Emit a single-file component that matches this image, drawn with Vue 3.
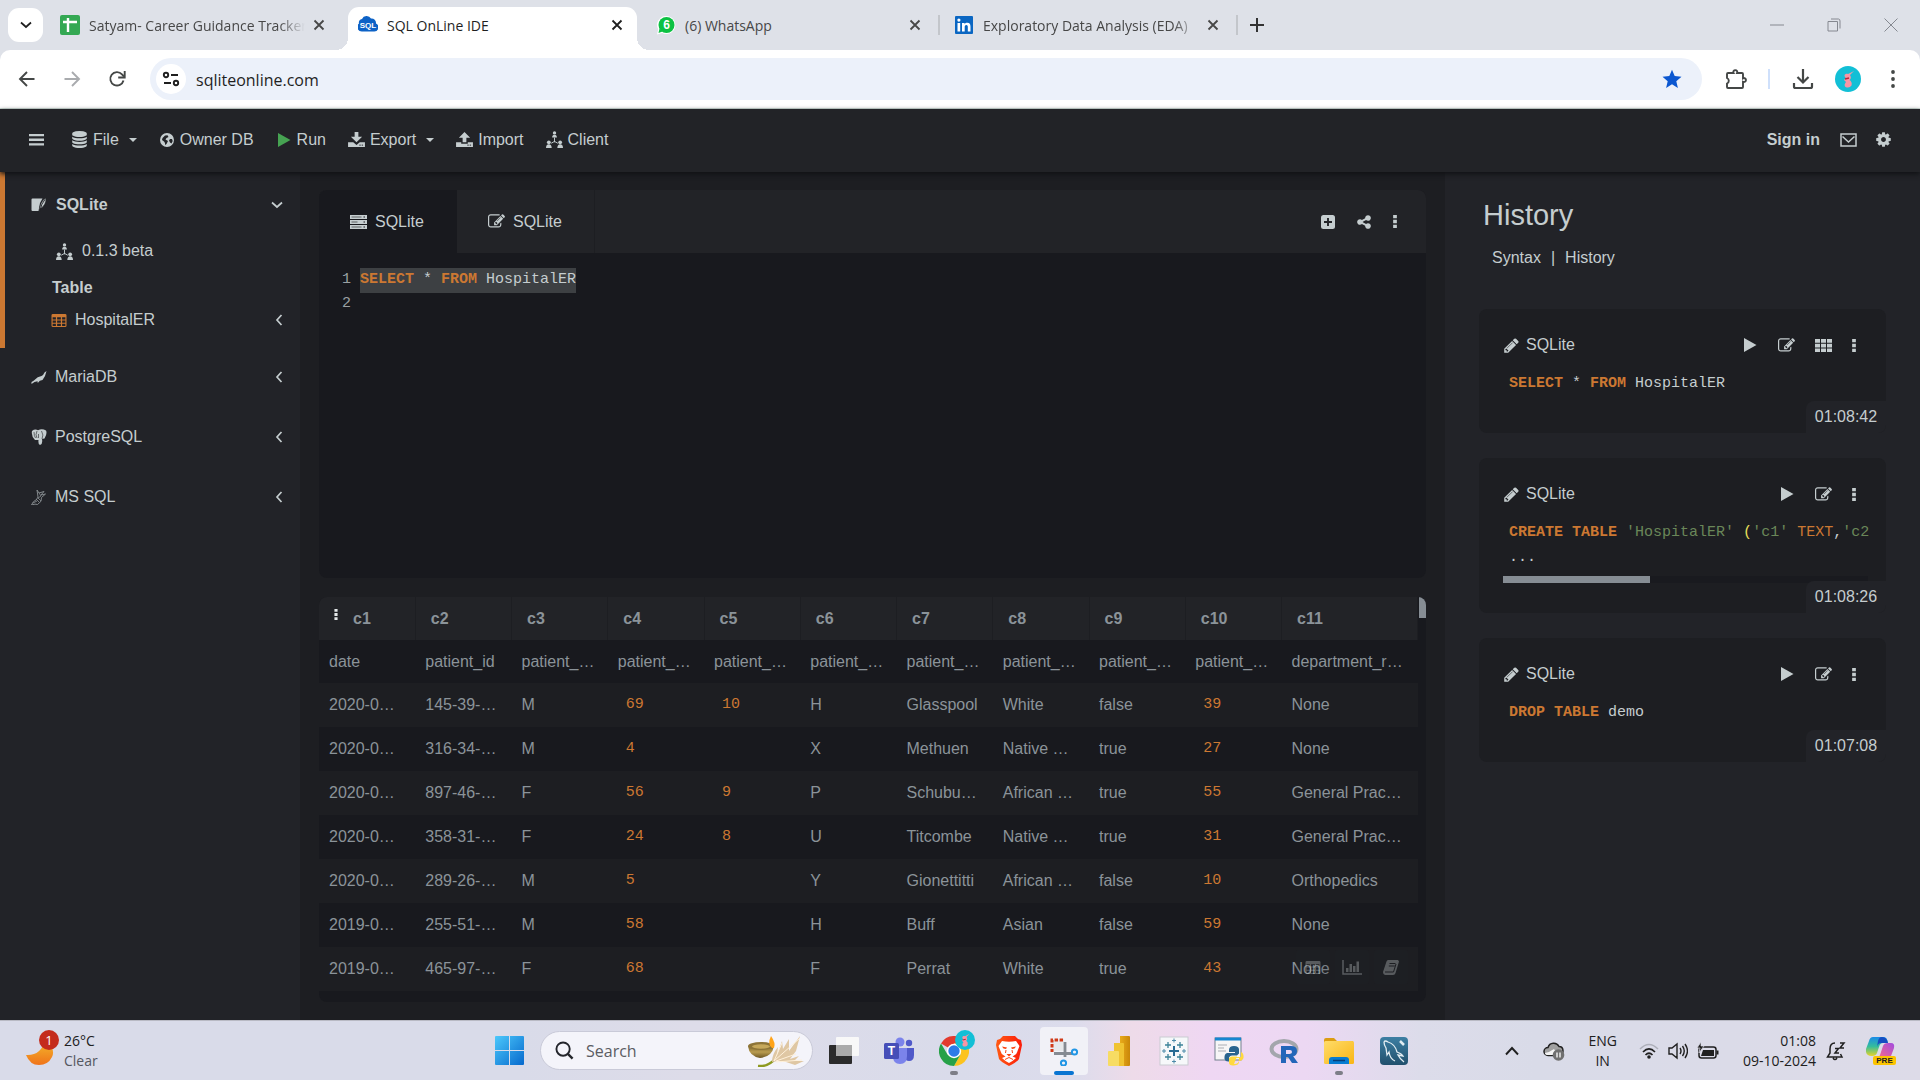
<script setup>
const browserTabs = [
  { title: 'Satyam- Career Guidance Tracker', icon: 'sheets', fade: true },
  { title: 'SQL OnLine IDE', icon: 'sqlcloud', mark: 'SQL', active: true },
  { title: '(6) WhatsApp', icon: 'whatsapp', mark: '6', divider: true },
  { title: 'Exploratory Data Analysis (EDA)', icon: 'linkedin', fade: true, divider: true },
]

const engines = [
  { name: 'MariaDB', icon: 'seal' },
  { name: 'PostgreSQL', icon: 'elephant' },
  { name: 'MS SQL', icon: 'mssql' },
]

const columns = ['c1', 'c2', 'c3', 'c4', 'c5', 'c6', 'c7', 'c8', 'c9', 'c10', 'c11']
const rows = [
  ['date', 'patient_id', 'patient_…', 'patient_…', 'patient_…', 'patient_…', 'patient_…', 'patient_…', 'patient_…', 'patient_…', 'department_r…'],
  ['2020-0…', '145-39-…', 'M', 69, 10, 'H', 'Glasspool', 'White', 'false', 39, 'None'],
  ['2020-0…', '316-34-…', 'M', 4, '', 'X', 'Methuen', 'Native …', 'true', 27, 'None'],
  ['2020-0…', '897-46-…', 'F', 56, 9, 'P', 'Schubu…', 'African …', 'true', 55, 'General Prac…'],
  ['2020-0…', '358-31-…', 'F', 24, 8, 'U', 'Titcombe', 'Native …', 'true', 31, 'General Prac…'],
  ['2020-0…', '289-26-…', 'M', 5, '', 'Y', 'Gionettitti', 'African …', 'false', 10, 'Orthopedics'],
  ['2019-0…', '255-51-…', 'M', 58, '', 'H', 'Buff', 'Asian', 'false', 59, 'None'],
  ['2019-0…', '465-97-…', 'F', 68, '', 'F', 'Perrat', 'White', 'true', 43, 'None'],
]

const history = [
  {
    time: '01:08:42',
    grid: true,
    lines: [[['SELECT', 'kw'], [' * ', ''], ['FROM', 'kw'], [' HospitalER', '']]],
  },
  {
    time: '01:08:26',
    scroll: true,
    lines: [
      [['CREATE', 'kw'], [' ', ''], ['TABLE', 'kw'], [' ', ''], ["'HospitalER'", 'str'], [' ', ''], ['(', 'par'], ["'c1'", 'str'], [' ', ''], ['TEXT', 'type'], [',', ''], ["'c2", 'str']],
      [['...', '']],
    ],
  },
  {
    time: '01:07:08',
    lines: [[['DROP', 'kw'], [' ', ''], ['TABLE', 'kw'], [' demo', '']]],
  },
]

const apps = [
  { name: 'Task view', icon: 'taskview' },
  { name: 'Teams', icon: 'teams', mark: 'T' },
  { name: 'Chrome', icon: 'chrome', running: true },
  { name: 'Brave', icon: 'brave' },
  { name: 'Snipping Tool', icon: 'snip', active: true },
  { name: 'Power BI', icon: 'powerbi' },
  { name: 'Tableau', icon: 'tableau' },
  { name: 'IDLE', icon: 'idle' },
  { name: 'R', icon: 'rlang' },
  { name: 'File Explorer', icon: 'folder', running: true },
  { name: 'MySQL Workbench', icon: 'mysql' },
]
</script>

<template>
  <div class="screen">
    <svg class="sprite" aria-hidden="true">
      <defs>
        <linearGradient id="gMoon" x1="0" y1="0" x2="0" y2="1"><stop offset="0" stop-color="#f3bb2c" /><stop offset="1" stop-color="#f0731a" /></linearGradient>
        <linearGradient id="gWin" x1="0" y1="0" x2="1" y2="1"><stop offset="0" stop-color="#4cc8fb" /><stop offset="1" stop-color="#0669cd" /></linearGradient>
        <linearGradient id="gFolder" x1="0" y1="0" x2="1" y2="1"><stop offset="0" stop-color="#ffdc6a" /><stop offset="1" stop-color="#f9b514" /></linearGradient>
        <linearGradient id="gBrave" x1="0" y1="0" x2="1" y2="0"><stop offset="0" stop-color="#ff5a13" /><stop offset="1" stop-color="#fb1c09" /></linearGradient>
        <linearGradient id="gSql" x1="0" y1="0" x2="0" y2="1"><stop offset="0" stop-color="#3d7fa3" /><stop offset="1" stop-color="#21506d" /></linearGradient>
        <linearGradient id="gCopA" x1="0" y1="0" x2="0" y2="1"><stop offset="0" stop-color="#1a8be8" /><stop offset=".5" stop-color="#35bd9b" /><stop offset="1" stop-color="#e6d429" /></linearGradient>
        <linearGradient id="gCopB" x1="1" y1="0" x2="0" y2="1"><stop offset="0" stop-color="#a24be0" /><stop offset="1" stop-color="#ff6f80" /></linearGradient>
        <linearGradient id="gDiya" x1="0" y1="0" x2="0" y2="1"><stop offset="0" stop-color="#7a642c" /><stop offset=".5" stop-color="#b99c50" /><stop offset="1" stop-color="#6d5724" /></linearGradient>
        <linearGradient id="gBi" x1="0" y1="0" x2="1" y2="0"><stop offset="0" stop-color="#e9ab1b" /><stop offset="1" stop-color="#c98709" /></linearGradient>
      </defs>
      <symbol id="sheets" viewBox="0 0 20 20"><rect width="20" height="20" rx="2" fill="#34a853" /><path d="M8 3v14M3 7h14" stroke="#fff" stroke-width="2.4" /></symbol>
      <symbol id="sqlcloud" viewBox="0 0 20 20"><path d="M4 16.500A4.500 4.500 0 0 1 1 8.500a3.500 3.500 0 0 1 3-4.500A5 5 0 0 1 13 3.500a4.500 4.500 0 0 1 5 5A4.200 4.200 0 0 1 16 16.500z" fill="#0d62c6" /></symbol>
      <symbol id="whatsapp" viewBox="0 0 20 20"><path d="M10.500 1a9 9 0 1 1-4.300 17L1 19.500l1.200-5.200A9 9 0 0 1 10.500 1z" fill="#fff" /><circle cx="10.500" cy="10" r="8" fill="#0cc143" /><path d="M2.500 18l1-4.500 3 3z" fill="#0cc143" /></symbol>
      <symbol id="linkedin" viewBox="0 0 20 20"><rect x="1" y="1" width="18" height="18" rx="1" fill="#0a66c2" /><path d="M3.500 8h2.700v8.500H3.500zM8 8h2.600v1.200c.5-.9 1.500-1.400 2.700-1.400 2.500 0 3.200 1.600 3.200 4v4.700h-2.700v-4.200c0-1.200-.2-2.200-1.500-2.200s-1.600 1-1.600 2.200v4.200H8z" fill="#fff" /><circle cx="4.900" cy="5.100" r="1.600" fill="#fff" /></symbol>
      <symbol id="x" viewBox="0 0 12 12"><path d="M1.500 1.500l9 9M10.500 1.500l-9 9" stroke="currentColor" stroke-width="1.800" fill="none" /></symbol>
      <symbol id="back" viewBox="0 0 18 18"><path d="M16.500 9H2.500M9 2L2 9l7 7" stroke="currentColor" stroke-width="1.900" fill="none" /></symbol>
      <symbol id="fwd" viewBox="0 0 18 18"><path d="M1.500 9h14M9 2l7 7-7 7" stroke="currentColor" stroke-width="1.900" fill="none" /></symbol>
      <symbol id="reload" viewBox="0 0 18 18"><path d="M15.500 10.500A6.700 6.700 0 1 1 14 4.300l2 2.200" stroke="currentColor" stroke-width="1.900" fill="none" /><path d="M16.700 1v6.500h-6.500" stroke="currentColor" stroke-width="1.900" fill="none" /></symbol>
      <symbol id="tune" viewBox="0 0 18 18"><g stroke="currentColor" stroke-width="1.900" fill="none"><circle cx="4" cy="5" r="2.200" /><path d="M9 5h7M2 13h7" /><circle cx="14" cy="13" r="2.200" /></g></symbol>
      <symbol id="star" viewBox="0 0 20 20"><path d="M10 .8l2.700 6.300 6.800.6-5.200 4.500 1.600 6.700L10 15.300l-5.900 3.600 1.600-6.700L.5 7.700l6.800-.6z" fill="#0b57d0" /></symbol>
      <symbol id="puzzle" viewBox="0 0 22 22"><path d="M3 5h5.500a2 2 0 1 1 3.600 0H17q1 0 1 1v4.300a2 2 0 1 1 0 3.500V19q0 1-1 1H3q-1 0-1-1v-3.500a3 3 0 0 0 0-5.500V6q0-1 1-1z" fill="none" stroke="currentColor" stroke-width="1.900" /></symbol>
      <symbol id="dl" viewBox="0 0 22 22"><path d="M11 1v13M5.500 9l5.500 5.500L16.500 9M2 15v3.500q0 1.500 1.500 1.500h15q1.500 0 1.500-1.500V15" fill="none" stroke="currentColor" stroke-width="2.200" /></symbol>
      <symbol id="avatar" viewBox="0 0 26 26"><circle cx="13" cy="13" r="13" fill="#12bfd6" /><path d="M11 12C8 10 10 7 13 8l6-3-4 4q2 3-.5 5 3 2 2 5.500-2 3-6 1.500-2-2 .5-5l-2-2z" fill="#f795a5" /><path d="M10 13l4-1" stroke="#b3283c" stroke-width="1.500" /></symbol>
      <symbol id="dots" viewBox="0 0 6 20"><circle cx="3" cy="3" r="1.900" fill="currentColor" /><circle cx="3" cy="10" r="1.900" fill="currentColor" /><circle cx="3" cy="17" r="1.900" fill="currentColor" /></symbol>
      <symbol id="kebab" viewBox="0 0 4 14"><path d="M0 0h4v3.600H0zM0 5.200h4v3.600H0zM0 10.400h4V14H0z" fill="currentColor" /></symbol>
      <symbol id="bars" viewBox="0 0 16 16"><path d="M0 2h16v2.500H0zM0 7h16v2.500H0zM0 12h16v2.500H0z" fill="currentColor" /></symbol>
      <symbol id="db" viewBox="0 0 1792 1792"><path fill="currentColor" d="M896 768q237 0 443-43t325-127v170q0 69-103 128t-280 93.500-385 34.500-385-34.500-280-93.500-103-128v-170q119 84 325 127t443 43zm0 768q237 0 443-43t325-127v170q0 69-103 128t-280 93.500-385 34.500-385-34.500-280-93.500-103-128v-170q119 84 325 127t443 43zm0-384q237 0 443-43t325-127v170q0 69-103 128t-280 93.500-385 34.500-385-34.500-280-93.500-103-128v-170q119 84 325 127t443 43zm0-1152q208 0 385 34.500t280 93.500 103 128v128q0 69-103 128t-280 93.500-385 34.500-385-34.500-280-93.500-103-128v-128q0-69 103-128t280-93.500 385-34.500z" /></symbol>
      <symbol id="globe" viewBox="0 0 16 16"><path fill="currentColor" fill-rule="evenodd" d="M8 1a7 7 0 1 1 0 14A7 7 0 0 1 8 1zM8.500 3.200L6 3.500 3.500 6l-.5 2 2 1.500 1 1.500v2l1.500-1 1.500-3-2.500-1.500L7.500 6l2-1zM11 7l-1 1.500 1 2 1.500 1L13.700 9l-.7-2z" /></symbol>
      <symbol id="play" viewBox="0 0 16 16"><path fill="currentColor" d="M2 1v14l12.500-7z" /></symbol>
      <symbol id="download" viewBox="0 0 18 16"><path fill="currentColor" d="M7 0h4v5h4L9 11 3 5h4zM0 11h5.500L9 13.800 12.500 11H18v5H0z" /><path d="M12 14h1.500M14.500 14H16" stroke="#222327" /></symbol>
      <symbol id="upload" viewBox="0 0 18 16"><path fill="currentColor" d="M9 0l6 6h-4v5H7V6H3zM0 11h5.500v1.500h7V11H18v5H0z" /><path d="M12 14h1.500M14.500 14H16" stroke="#222327" /></symbol>
      <symbol id="nodes" viewBox="0 0 18 18"><g fill="currentColor"><circle cx="9" cy="2" r="1.800" /><path d="M6.500 7q0-3 2.500-3t2.500 3z" /><circle cx="3" cy="12" r="2" /><path d="M0 18q0-4 3-4t3 4z" /><circle cx="15" cy="12" r="2" /><path d="M12 18q0-4 3-4t3 4z" /></g><path d="M9 7v5M9 11l-3.500 2M9 11l3.500 2" stroke="currentColor" stroke-width="1" /></symbol>
      <symbol id="mail" viewBox="0 0 17 14"><path d="M1 1h15v12H1zM2.500 3.500l6 5.500 6-5.500" fill="none" stroke="currentColor" stroke-width="1.500" /></symbol>
      <symbol id="cog" viewBox="0 0 1792 1792"><path fill="currentColor" d="M1152 896q0-106-75-181t-181-75-181 75-75 181 75 181 181 75 181-75 75-181zm512-109v222q0 12-8 23t-20 13l-185 28q-19 54-39 91 35 50 107 138 10 12 10 25t-9 23q-27 37-99 108t-94 71q-12 0-26-9l-138-108q-44 23-91 38-16 136-29 186-7 28-36 28h-222q-14 0-24.500-8.500t-11.500-21.500l-28-184q-49-16-90-37l-141 107q-10 9-25 9-14 0-25-11-126-114-165-168-7-10-7-23 0-12 8-23 15-21 51-66.500t54-70.500q-27-50-41-99l-183-27q-13-2-21-12.500t-8-23.500v-222q0-12 8-23t19-13l186-28q14-46 39-92-40-57-107-138-10-12-10-24 0-10 9-23 26-36 98.500-107.500t94.500-71.500q13 0 26 10l138 107q44-23 91-38 16-136 29-186 7-28 36-28h222q14 0 24.500 8.500t11.500 21.500l28 184q49 16 90 37l142-107q9-9 24-9 13 0 25 10 129 119 165 170 7 8 7 22 0 12-8 23-15 21-51 66.500t-54 70.500q26 50 41 98l183 28q13 2 21 12.500t8 23.500z" /></symbol>
      <symbol id="feather" viewBox="0 0 16 16"><path d="M1.500 1.500h10L9 6 7.500 14H1.500q-1 0-1-1v-10.500q0-1 1-1z" fill="currentColor" /><path d="M8.300 16Q8.500 4 15 1q.5 7-6 11z" fill="currentColor" stroke="#222327" stroke-width=".6" /><path d="M8.800 14Q10.500 6 14 2.500" stroke="#222327" stroke-width=".9" fill="none" /></symbol>
      <symbol id="seal" viewBox="0 0 16 16"><path d="M15.500 2L14 7l-2.500 4-2.700.8-2 2.200-.3-1.800-3 .8-3 2L.500 13q2-.8 3-2 3-3.500 7-4 2-1 3-3.500z" fill="currentColor" /></symbol>
      <symbol id="elephant" viewBox="0 0 16 16"><path d="M1 2Q4-.5 7 1.200q4-2 8 .3 1.500 3-1.500 8L11 10q1 5-2 6-2-.5-1.500-5L4 11Q0 7 1 2z" fill="currentColor" /><path d="M6 2q-2 4 0 7M10.500 2q2.500 4 .5 8M7.500 5v4M3 3q0 4 1.500 6" stroke="#222327" fill="none" stroke-width=".6" /></symbol>
      <symbol id="mssql" viewBox="0 0 16 16"><path d="M6 1l2 3 5-1.500-3 3.500 4.500-1-4 3.500q1 4-4 7-2-1-6 .5 1-3.500 5-5.500L7 8z" fill="none" stroke="currentColor" stroke-width=".9" /><path d="M8 4l2 3-3 2 3 3M5 10l3 3M2 14l4-2" stroke="currentColor" stroke-width=".8" fill="none" /></symbol>
      <symbol id="tablei" viewBox="0 0 16 16"><path fill="currentColor" fill-rule="evenodd" d="M1.500 1h13q1.500 0 1.500 1.500v11q0 1.500-1.500 1.500h-13Q0 15 0 13.500v-11Q0 1 1.500 1zM1.200 4.500v2.300h3.500V4.500zM6 4.500v2.300h4V4.500zM11.300 4.500v2.300h3.500V4.500zM1.200 8v2.300h3.500V8zM6 8v2.300h4V8zM11.300 8v2.300h3.500V8zM1.200 11.500v2.300h3.500v-2.300zM6 11.500v2.300h4v-2.300zM11.300 11.500v2.300h3.500v-2.300z" /></symbol>
      <symbol id="cleft" viewBox="0 0 8 12"><path d="M6.500 1L2 6l4.500 5" fill="none" stroke="currentColor" stroke-width="1.700" /></symbol>
      <symbol id="cdown" viewBox="0 0 12 8"><path d="M1 1.500l5 4.500 5-4.500" fill="none" stroke="currentColor" stroke-width="1.700" /></symbol>
      <symbol id="server" viewBox="0 0 17 14"><path d="M0 0h17v4H0zM0 5h17v4H0zM0 10h17v4H0z" fill="currentColor" /><path d="M1.500 2h10M1.500 7h6M1.500 12h10" stroke="#18191d" stroke-width=".6" /><path d="M13.500 2h1.500M13.500 7h1.500M13.500 12h1.500" stroke="#18191d" stroke-width="1" /></symbol>
      <symbol id="edit" viewBox="0 0 1792 1792"><path fill="currentColor" d="M888 1184l116-116-152-152-116 116v56h96v96h56zm440-720q-16-16-33 1l-350 350q-17 17-1 33t33-1l350-350q17-17 1-33zm80 594v190q0 119-84.500 203.500t-203.500 84.500h-832q-119 0-203.500-84.500t-84.500-203.500v-832q0-119 84.500-203.500t203.500-84.500h832q63 0 117 25 15 7 18 23 3 17-9 29l-49 49q-14 14-32 8-23-6-45-6h-832q-66 0-113 47t-47 113v832q0 66 47 113t113 47h832q66 0 113-47t47-113v-126q0-13 9-22l64-64q15-15 35-7t20 29zm-96-738l288 288-672 672h-288v-288zm444 132l-92 92-288-288 92-92q28-28 68-28t68 28l152 152q28 28 28 68t-28 68z" /></symbol>
      <symbol id="pencil" viewBox="0 0 1792 1792"><path fill="currentColor" d="M491 1536l91-91-235-235-91 91v107h128v128h107zm523-928q0-22-22-22-10 0-17 7l-542 542q-7 7-7 17 0 22 22 22 10 0 17-7l542-542q7-7 7-17zm-54-192l416 416-832 832h-416v-416zm683 96q0 53-37 90l-166 166-416-416 166-165q36-38 90-38 53 0 91 38l235 234q37 39 37 91z" /></symbol>
      <symbol id="plusbox" viewBox="0 0 14 14"><rect width="14" height="14" rx="2.500" fill="currentColor" /><path d="M7 3v8M3 7h8" stroke="#222327" stroke-width="1.900" /></symbol>
      <symbol id="share" viewBox="0 0 1792 1792"><path fill="currentColor" d="M1344 1024q133 0 226.500 93.500t93.500 226.500-93.500 226.500-226.500 93.500-226.500-93.500-93.500-226.500q0-12 2-34l-360-180q-92 86-218 86-133 0-226.500-93.500t-93.500-226.500 93.500-226.500 226.500-93.500q126 0 218 86l360-180q-2-22-2-34 0-133 93.500-226.500t226.500-93.500 226.500 93.500 93.500 226.500-93.500 226.500-226.500 93.500q-126 0-218-86l-360 180q2 22 2 34t-2 34l360 180q92-86 218-86z" /></symbol>
      <symbol id="gridi" viewBox="0 0 17 13"><path fill="currentColor" d="M0 0h5v3.700H0zM6 0h5v3.700H6zM12 0h5v3.700h-5zM0 4.700h5v3.700H0zM6 4.700h5v3.700H6zM12 4.700h5v3.700h-5zM0 9.400h5V13H0zM6 9.400h5V13H6zM12 9.400h5V13h-5z" /></symbol>
      <symbol id="chart" viewBox="0 0 20 15"><path d="M1 0v14h19" fill="none" stroke="currentColor" stroke-width="1.500" /><path d="M4 12V8h2.500v4zM7.500 12V4H10v8zM11 12V6h2.500v6zM14.500 12V1.500H17V12z" fill="currentColor" /></symbol>
      <symbol id="book" viewBox="0 0 16 15"><path d="M5 0h10l1 1.500-3.500 11.500q-.5 2-2.500 2H2q-2-.5-2-3L3.500 1.500Q4 0 5 0z" fill="currentColor" /><path d="M6.500 3.500h6M5.800 6h6M2 12h8.500l2.500-8" fill="none" stroke="#1d1e22" stroke-width="1" /></symbol>
      <symbol id="moon" viewBox="0 0 28 28"><path d="M0 18q15 1 19-15 11 9 7 17-4 8-13 8T0 18z" fill="url(#gMoon)" /></symbol>
      <symbol id="win" viewBox="0 0 29 29"><path d="M1 0h13v14H0V1q0-1 1-1zM15 0h13q1 0 1 1v13H15zM0 15h14v14H1q-1 0-1-1zM15 15h14v13q0 1-1 1H15z" fill="url(#gWin)" /></symbol>
      <symbol id="mag" viewBox="0 0 20 20"><circle cx="8.500" cy="8.500" r="7" fill="none" stroke="#23252b" stroke-width="2" /><path d="M13.500 13.500l5 5" stroke="#23252b" stroke-width="2.500" /></symbol>
      <symbol id="diya" viewBox="0 0 56 32"><path d="M10 31q10 1 17-7" stroke="#8e9a20" stroke-width="2.500" fill="none" /><path d="M24 27q0-8 6-15l-1 8 5-14 1 8 6-10 0 12 11-15-4 15-6 8 9-3-5 5 10 0-9 4-9-3-8-1z" fill="#dfc7a3" /><path d="M26 26L34 8M26 26L52 3M28 26l20-7M28 27l26-2" stroke="#fff1da" stroke-width="1" /><path d="M0 11q13 5 26 0Q24 22 12 23 1 21 0 11z" fill="url(#gDiya)" /><ellipse cx="13" cy="11" rx="13" ry="4" fill="#8d7438" /><ellipse cx="13" cy="11.500" rx="9" ry="2.200" fill="#c6a85b" /><path d="M24 13q-5-4-1-12 5 7 3 12z" fill="#ffa318" /></symbol>
      <symbol id="taskview" viewBox="0 0 30 30"><rect x="0" y="9" width="23" height="19" rx="1" fill="#2b2b2b" /><rect x="7" y="1" width="23" height="19" rx="1" fill="#f8f8f8" /><path d="M7 9h16v11H7z" fill="#aaa" /></symbol>
      <symbol id="teams" viewBox="0 0 30 30"><circle cx="25" cy="7" r="3.200" fill="#5059c9" /><path d="M21 12h9v7q0 6-5 6-4 0-4-4z" fill="#5059c9" /><circle cx="16" cy="6" r="4.500" fill="#7b83eb" /><path d="M9 12h14v8q0 8-7 8t-7-8z" fill="#7b83eb" /><rect x="0" y="7" width="15" height="16" rx="1.500" fill="#464eb8" /></symbol>
      <symbol id="chrome" viewBox="0 0 30 30"><path d="M15 15L2 7.500A15 15 0 0 1 28 7.500H15z" fill="#e33b2e" /><path d="M28 7.500A15 15 0 0 1 15 30l6.500-11.500L15 7.500z" fill="#fcc31e" /><path d="M2 7.500A15 15 0 0 0 15 30l6.500-11.500H8.500z" fill="#26a148" /><circle cx="15" cy="15" r="7.200" fill="#fff" /><circle cx="15" cy="15" r="5.700" fill="#2c7be8" /></symbol>
      <symbol id="brave" viewBox="0 0 30 30"><path d="M9 0h12l3 3 3 1 1 5-3 14q-2 3-10 7-8-4-10-7L2 9l1-5 3-1z" fill="url(#gBrave)" /><path d="M8 5q7 1.500 14 0l3.500 5-2 5q-.5 3-3.500 4.500l-1.500 1L22 22q-3 3-7 5-4-2-7-5l3.500-1.500-1.500-1Q7 18 6.500 15l-2-5z" fill="#fff" /><path d="M8 10.500l5 1-1 1.500q-3 0-4-2.500zM22 10.500l-5 1 1 1.500q3 0 4-2.500zM12.500 18h5L15 20.500z" fill="#fb4410" /><path d="M12 14l-.5 3M18 14l.5 3M11 23.500l4-2 4 2" fill="none" stroke="#fb4410" stroke-width="1" /></symbol>
      <symbol id="snip" viewBox="0 0 30 30"><path d="M3 3h12v12H3z" fill="#e7e9ec" /><path d="M14 4H3v12" fill="none" stroke="#d03a18" stroke-width="3" stroke-dasharray="3.400 1.600" /><path d="M16 6v15M5 17.500h18" stroke="#858a92" stroke-width="2.800" /><circle cx="25.500" cy="16" r="2.600" fill="none" stroke="#2196e5" stroke-width="2" /><circle cx="14.500" cy="27" r="2.600" fill="none" stroke="#2196e5" stroke-width="2" /></symbol>
      <symbol id="powerbi" viewBox="0 0 30 30"><path d="M16 0h9q1 0 1 1v28q0 1-1 1h-9z" fill="url(#gBi)" /><path d="M10 7h9q1 0 1 1v22H10z" fill="#f0c331" /><path d="M5 15h9q1 0 1 1v14H5q-1 0-1-1V16q0-1 1-1z" fill="#f7dc63" /></symbol>
      <symbol id="tableau" viewBox="0 0 30 30"><rect x="1" y="1" width="28" height="28" fill="#f6f8fa" stroke="#c9ccd2" /><path d="M15 10v10M10 15h10" stroke="#286b93" stroke-width="2" /><path d="M9 6v6M6 9h6M21 6v6M18 9h6M9 18v6M6 21h6M21 18v6M18 21h6" stroke="#3d8399" stroke-width="1.300" /><path d="M15 2.500v4M13 4.500h4M15 23.500v4M13 25.500h4M3 15h4M5 13v4M23 15h4M25 13v4" stroke="#4d8ba9" stroke-width="1" /></symbol>
      <symbol id="idle" viewBox="0 0 30 30"><rect x="1" y="2" width="26" height="22" fill="#f6f6f6" stroke="#73808d" /><path d="M1 1.500h26v3H1z" fill="#1686d1" /><path d="M4 9h9M4 12h6M4 15h8" stroke="#aaaeb4" stroke-width="1.200" /><path d="M20 10q-5 0-5 4v2h6v1h-8q-3 1-2.500 6 1 3 4.500 2.500v-4q1-2 3-2h5l2-2v-4q0-3.500-5-3.500z" fill="#29658f" /><path d="M20 28q5 0 5-4v-2h-6v-1h8q0-3 0-5 3 1 2.500 6-1 3-4.500 3v1q0 3-5 3.500t-5-3v-4q1-2 3-2h5" fill="#ffd93f" /></symbol>
      <symbol id="rlang" viewBox="0 0 30 30"><ellipse cx="15" cy="13" rx="12.500" ry="8" fill="none" stroke="#a3a6ac" stroke-width="4" /><path fill-rule="evenodd" d="M12 10h10q6 0 6 5t-4 5l5 7h-6l-4-6h-2v6h-5zm5 4v4h4q2 0 2-2t-2-2z" fill="#2366b9" /></symbol>
      <symbol id="folder" viewBox="0 0 30 30"><path d="M0 4q0-2 2-2h8l3 3h16v8H0z" fill="#dc9d12" /><rect x="0" y="5" width="30" height="23" rx="1.500" fill="url(#gFolder)" /><path d="M5 28v-4q0-3 3-3h14q3 0 3 3v4z" fill="#087cd1" /><path d="M9 24.500h12" stroke="#073f79" stroke-width="1.500" /></symbol>
      <symbol id="mysql" viewBox="0 0 30 30"><rect x="1" y="1" width="28" height="28" rx="4" fill="url(#gSql)" /><path d="M5 6q1-2 4 0 7 2 9 10 5 2 6 4l-5-1q2 4 6 7M5 6q0 3 2 6l1 7 2-3q1 7 6 9" fill="none" stroke="#e2edf2" stroke-width="1.300" /><path d="M21 5l4 4" stroke="#e2edf2" stroke-width="2.500" /></symbol>
      <symbol id="cup" viewBox="0 0 14 10"><path d="M1 8.500l6-6.500 6 6.500" fill="none" stroke="#202020" stroke-width="1.900" /></symbol>
      <symbol id="cloud" viewBox="0 0 22 20"><path d="M5 14.500a4 4 0 0 1 0-8 6 6 0 0 1 11-1q4 0 4 4.500t-4 4.500z" fill="#a0a0a0" stroke="#222" stroke-width="1.500" /><path d="M2 12q5-1 9-4l4 6H5q-3 0-3-2z" fill="#f3f3f3" /><circle cx="15.500" cy="14" r="5.800" fill="#707070" /><path d="M14 11.500v5M17 11.500v5" stroke="#fff" stroke-width="1.300" /></symbol>
      <symbol id="wifi" viewBox="0 0 20 16"><path d="M1 6q9-9 18 0" fill="none" stroke="#aeb0ba" stroke-width="1.500" /><path d="M4 9q6-6 12 0M6.500 12q3.500-3.500 7 0" fill="none" stroke="#202020" stroke-width="1.700" /><circle cx="10" cy="14" r="1.800" fill="#202020" /></symbol>
      <symbol id="speaker" viewBox="0 0 20 18"><path d="M1 6h3l5-4v14l-5-4H1zM12 6q2 3 0 6M14.500 4q3.500 5 0 10M17 2q5 7 0 14" fill="none" stroke="#202020" stroke-width="1.400" /></symbol>
      <symbol id="battery" viewBox="0 0 22 18"><rect x="2" y="5" width="17" height="11" rx="2.500" fill="none" stroke="#202020" stroke-width="1.500" /><path d="M6 8h11v6H4z" fill="#202020" /><path d="M20.500 8.500v4" stroke="#202020" stroke-width="2" /><path d="M4 0L0 6h3l-1 5 5-7H4z" fill="#202020" stroke="#dcdce8" stroke-width=".7" /></symbol>
      <symbol id="bell" viewBox="0 0 20 20"><path d="M9 2Q4 2 4 8v4l-2.500 4H16l-1.500-3M7 17q2 3 4 0" fill="none" stroke="#202020" stroke-width="1.500" /><path d="M9 7.500h3.500L9 12h4M14 2h4l-4 5h4" fill="none" stroke="#202020" stroke-width="1.500" /></symbol>
      <symbol id="copilot" viewBox="0 0 29 29"><path d="M7 1h11q3 0 4 6h-5q-3 0-4 4l-2 6q-1 3-5 3-7 0-6-7L3 5q1-4 4-4z" fill="url(#gCopA)" /><path d="M16 1q5 0 6 6h-7q-3 0-4 4l1-6q1-4 4-4z" fill="#164ec2" /><path d="M22 7h3q4 0 3 5l-3 8q-1 3-5 3H10q3-1 4-4l3-9q1-3 5-3z" fill="url(#gCopB)" /></symbol>
    </svg>

    <header class="chrome">
      <div class="strip">
        <button class="tabsearch" aria-label="Search tabs"><svg width="12" height="8"><use href="#cdown" /></svg></button>
        <div v-for="t in browserTabs" :key="t.title" class="btab" :class="{ on: t.active, div: t.divider }">
          <span class="fav" :class="t.icon"><svg width="20" height="20"><use :href="'#' + t.icon" /></svg><em v-if="t.mark">{{ t.mark }}</em></span>
          <span class="btitle" :class="{ fade: t.fade }">{{ t.title }}</span>
          <button aria-label="Close tab"><svg width="12" height="12"><use href="#x" /></svg></button>
        </div>
        <button class="newtab" aria-label="New tab"><svg width="14" height="14" viewBox="0 0 14 14"><path d="M7 0v14M0 7h14" stroke="currentColor" stroke-width="2" /></svg></button>
        <div class="winbtns">
          <button aria-label="Minimize"><svg width="14" height="14" viewBox="0 0 14 14"><path d="M0 7h14" stroke="currentColor" /></svg></button>
          <button aria-label="Restore"><svg width="14" height="14" viewBox="0 0 14 14"><path d="M1 3.500h9.500V13H1zM4 1h7.500Q13 1 13 3v7.500" stroke="currentColor" fill="none" /></svg></button>
          <button aria-label="Close window"><svg width="14" height="14" viewBox="0 0 14 14"><path d="M.5.5l13 13M13.500.5l-13 13" stroke="currentColor" /></svg></button>
        </div>
      </div>
      <div class="toolbar">
        <button aria-label="Back"><svg width="18" height="18"><use href="#back" /></svg></button>
        <button aria-label="Forward" class="dim"><svg width="18" height="18"><use href="#fwd" /></svg></button>
        <button aria-label="Reload"><svg width="18" height="18"><use href="#reload" /></svg></button>
        <div class="omnibox">
          <button class="site" aria-label="Site information"><svg width="18" height="18"><use href="#tune" /></svg></button>
          <input aria-label="Address" value="sqliteonline.com" />
          <button aria-label="Bookmark"><svg width="20" height="20"><use href="#star" /></svg></button>
        </div>
        <div class="exts">
          <button aria-label="Extensions"><svg width="22" height="22"><use href="#puzzle" /></svg></button>
          <i></i>
          <button aria-label="Downloads"><svg width="22" height="22"><use href="#dl" /></svg></button>
          <button aria-label="Profile"><svg width="26" height="26"><use href="#avatar" /></svg></button>
          <button aria-label="Menu"><svg width="6" height="20"><use href="#dots" /></svg></button>
        </div>
      </div>
    </header>

    <nav class="nav">
      <button class="burger" aria-label="Menu"><svg width="15" height="15"><use href="#bars" /></svg></button>
      <button><svg width="17" height="17"><use href="#db" /></svg>File<b class="caret"></b></button>
      <button><svg width="16" height="16"><use href="#globe" /></svg>Owner DB</button>
      <button><svg width="16" height="16" class="green"><use href="#play" /></svg>Run</button>
      <button><svg width="17" height="15"><use href="#download" /></svg>Export<b class="caret"></b></button>
      <button><svg width="17" height="15"><use href="#upload" /></svg>Import</button>
      <button><svg width="17" height="17"><use href="#nodes" /></svg>Client</button>
      <a class="signin" href="#signin">Sign in</a>
      <button class="messages" aria-label="Messages"><svg class="solo" width="17" height="14"><use href="#mail" /></svg></button>
      <button aria-label="Settings"><svg class="solo" width="17" height="17"><use href="#cog" /></svg></button>
    </nav>

    <div class="body">
      <aside class="side">
        <section class="current">
          <button class="engine first"><svg width="16" height="16"><use href="#feather" /></svg><strong>SQLite</strong><svg class="chev" width="12" height="8"><use href="#cdown" /></svg></button>
          <a class="version" href="#beta"><svg width="17" height="17"><use href="#nodes" /></svg>0.1.3 beta</a>
          <h2>Table</h2>
          <button class="tbl"><svg class="orange" width="16" height="15"><use href="#tablei" /></svg>HospitalER<svg class="chev" width="8" height="12"><use href="#cleft" /></svg></button>
        </section>
        <button v-for="e in engines" :key="e.name" class="engine"><svg width="16" height="16" :class="{ faint: e.icon === 'mssql' }"><use :href="'#' + e.icon" /></svg>{{ e.name }}<svg class="chev" width="8" height="12"><use href="#cleft" /></svg></button>
      </aside>

      <main class="work">
        <section class="editor">
          <div class="tabs">
            <button class="etab on"><svg width="17" height="14"><use href="#server" /></svg>SQLite</button>
            <button class="etab"><svg width="17" height="17"><use href="#edit" /></svg>SQLite</button>
            <div class="tools">
              <button aria-label="Add"><svg width="14" height="14"><use href="#plusbox" /></svg></button>
              <button aria-label="Share"><svg width="16" height="16"><use href="#share" /></svg></button>
              <button aria-label="More"><svg width="4" height="13"><use href="#kebab" /></svg></button>
            </div>
          </div>
          <div class="code">
            <div class="line"><span class="num">1</span><code class="sel"><b class="kw">SELECT</b> * <b class="kw">FROM</b> HospitalER</code></div>
            <div class="line"><span class="num">2</span></div>
          </div>
        </section>

        <section class="results">
          <div class="tablewrap">
            <table>
              <colgroup><col v-for="c in columns" :key="c" :class="c" /></colgroup>
              <thead>
                <tr>
                  <th v-for="(c, i) in columns" :key="c" scope="col"><svg v-if="i === 0" class="thdots" width="4" height="11"><use href="#kebab" /></svg>{{ c }}</th>
                </tr>
              </thead>
              <tbody>
                <tr v-for="(r, i) in rows" :key="i">
                  <td v-for="(v, j) in r" :key="j" :class="{ n: typeof v === 'number' }">{{ v }}</td>
                </tr>
              </tbody>
            </table>
            <div class="vbar"><span></span></div>
          </div>
          <div class="floaters">
            <button aria-label="Table view"><svg width="18" height="15"><use href="#tablei" /></svg></button>
            <button aria-label="Chart view"><svg width="20" height="15"><use href="#chart" /></svg></button>
            <button aria-label="Notes"><svg width="16" height="15"><use href="#book" /></svg></button>
          </div>
        </section>
      </main>

      <aside class="hist">
        <h1>History</h1>
        <p class="links"><a href="#syntax">Syntax</a><span>|</span><a href="#history">History</a></p>
        <article v-for="h in history" :key="h.time" class="card">
          <header>
            <svg width="17" height="17"><use href="#pencil" /></svg><span>SQLite</span>
            <div class="acts">
              <button aria-label="Run"><svg width="16" height="16"><use href="#play" /></svg></button>
              <button aria-label="Edit"><svg width="17" height="17"><use href="#edit" /></svg></button>
              <button v-if="h.grid" aria-label="Grid"><svg width="17" height="13"><use href="#gridi" /></svg></button>
              <button aria-label="More"><svg width="4" height="13"><use href="#kebab" /></svg></button>
            </div>
          </header>
          <div v-for="(l, i) in h.lines" :key="i" class="cline"><code><span v-for="(p, j) in l" :key="j" :class="p[1]">{{ p[0] }}</span></code></div>
          <div v-if="h.scroll" class="hbar"><span></span></div>
          <time>{{ h.time }}</time>
        </article>
      </aside>
    </div>

    <footer class="taskbar">
      <button class="weather">
        <span class="wicon"><svg width="28" height="28"><use href="#moon" /></svg><em>1</em></span>
        <span class="wtext"><span>26°C</span><small>Clear</small></span>
      </button>
      <div class="dock">
        <button class="app" aria-label="Start"><svg width="29" height="29"><use href="#win" /></svg></button>
        <label class="search"><svg width="19" height="19"><use href="#mag" /></svg><input type="text" placeholder="Search" aria-label="Search" /><svg width="56" height="32"><use href="#diya" /></svg></label>
        <button v-for="a in apps" :key="a.name" class="app" :class="{ on: a.active, run: a.running }" :aria-label="a.name"><svg width="30" height="30"><use :href="'#' + a.icon" /></svg><em v-if="a.mark" class="letter">{{ a.mark }}</em><svg v-if="a.icon === 'chrome'" class="pic" width="20" height="20"><use href="#avatar" /></svg></button>
      </div>
      <div class="tray">
        <svg width="14" height="10"><use href="#cup" /></svg>
        <svg class="cl" width="22" height="20"><use href="#cloud" /></svg>
        <span class="lang">ENG<br />IN</span>
        <svg width="20" height="16"><use href="#wifi" /></svg>
        <svg class="sp" width="20" height="18"><use href="#speaker" /></svg>
        <svg class="sp" width="22" height="18"><use href="#battery" /></svg>
        <span class="clock">01:08<br />09-10-2024</span>
        <svg class="bell" width="20" height="20"><use href="#bell" /></svg>
        <span class="pilot"><svg width="29" height="29"><use href="#copilot" /></svg><em>PRE</em></span>
      </div>
    </footer>
  </div>
</template>

<style>
body { margin: 0; background: #1d1e22; }
</style>

<style scoped>
* { box-sizing: border-box; }
.screen { min-height: 100vh; display: flex; flex-direction: column; font: 16px/20px "Liberation Sans", Arial, sans-serif; color: #c5cdcf; overflow: hidden; }
.sprite { position: absolute; width: 0; height: 0; }
button { background: none; border: 0; padding: 0; margin: 0; color: inherit; font: inherit; display: flex; align-items: center; text-align: left; }
svg { display: block; flex: none; }
input { border: 0; background: none; outline: 0; padding: 0; min-width: 0; font: inherit; color: inherit; }
a { color: inherit; text-decoration: none; }
em { font-style: normal; }

.chrome { background: #dee1e8; color: #1f1f1f; font-family: "Open Sans", "Noto Sans", sans-serif; }
.strip { display: flex; height: 50px; padding: 7px 0 0 8px; }
.tabsearch { width: 35px; height: 34px; margin: 1px 7px 0 0; background: #fff; border-radius: 11px; justify-content: center; }
.btab { position: relative; flex: 0 1 289px; min-width: 0; height: 43px; margin-right: 9px; padding: 0 14px 7px 10px; display: flex; align-items: center; font-size: 14px; color: #474747; }
.btab.on { background: #fff; border-radius: 11px 11px 0 0; color: #1f1f1f; }
.btab.on::before, .btab.on::after { content: ""; position: absolute; bottom: 0; width: 12px; height: 12px; }
.btab.on::before { left: -12px; background: radial-gradient(circle at 0 0, #dee1e8 12px, #fff 12px); }
.btab.on::after { right: -12px; background: radial-gradient(circle at 100% 0, #dee1e8 12px, #fff 12px); }
.btab.div::after { content: ""; position: absolute; right: -5px; top: 8px; width: 2px; height: 20px; background: #c3c6cb; }
.fav { position: relative; }
.fav em { position: absolute; inset: 0; text-align: center; color: #fff; font: 700 8px/22px "Liberation Sans", sans-serif; }
.fav.whatsapp em { left: 1px; font-size: 12px; line-height: 20px; }
.btitle { flex: 1; margin: 0 8px 0 9px; padding-top: 2px; overflow: hidden; white-space: nowrap; }
.btitle.fade { -webkit-mask-image: linear-gradient(90deg, #000 88%, transparent); mask-image: linear-gradient(90deg, #000 88%, transparent); }
.newtab { height: 36px; margin-left: 8px; color: #333; }
.winbtns { margin-left: auto; display: flex; gap: 43px; height: 36px; padding-right: 22px; color: #858890; }
.toolbar { display: flex; align-items: center; height: 59px; padding: 0 24px 0 18px; background: #fff; border-bottom: 1px solid #d4e2dc; border-radius: 10px 10px 0 0; color: #444746; }
.toolbar > button { width: 18px; margin-right: 27px; }
.toolbar > button:nth-child(3) { margin-right: 24px; }
.dim { color: #a9abae; }
.omnibox { flex: 1; display: flex; align-items: center; height: 42px; padding: 0 20px 0 6px; border-radius: 21px; background: #ecf1fa; color: #1f1f1f; }
.site { width: 30px; height: 30px; justify-content: center; background: #fff; border-radius: 50%; margin-right: 10px; }
.omnibox input { flex: 1; padding-top: 2px; font-size: 16px; }
.exts { display: flex; align-items: center; margin-left: 23px; }
.exts i { width: 2px; height: 20px; margin: 0 22px 0 21px; background: #cfe0fb; }
.exts button + button { margin-left: 21px; }
.exts button:last-child { margin-left: 29px; }

.nav { position: relative; z-index: 1; display: flex; align-items: center; height: 63px; padding: 0 28px 2px 29px; background: #222327; box-shadow: 0 2px 5px #101114; }
.nav > button { margin-right: 22px; }
.nav > button.burger { margin-right: 22px; }
.nav > button.messages { margin-right: 18px; }
.nav svg { margin-right: 5px; }
.nav .solo { margin-right: 0; }
.nav .green { color: #46a352; }
.nav > button:last-child { margin-right: 0; }
.caret { margin-left: 10px; border: 4px solid transparent; border-top-color: currentColor; border-bottom: 0; }
.signin { margin: 0 20px 0 auto; font-weight: 700; }

.body { flex: 1; display: flex; }
.side { width: 300px; flex: none; background: #222328; }
.current { height: 176px; padding-top: 21px; border-left: 5px solid #cc7832; }
.engine { width: 100%; height: 24px; padding: 0 17px 0 31px; margin-bottom: 36px; }
.engine svg:first-child { margin-right: 8px; }
.current .engine { padding-left: 26px; margin-bottom: 20px; }
.current .engine svg:first-child { margin-right: 9px; }
.current + .engine { margin-top: 17px; }
.chev { margin-left: auto; }
.faint { color: #8b9194; }
.version { display: flex; align-items: center; height: 28px; padding-left: 51px; }
.version svg { margin-right: 9px; }
h2 { margin: 13px 0 0; padding-left: 47px; font-size: 16px; line-height: 20px; }
.tbl { width: 100%; height: 20px; margin-top: 12px; padding: 0 17px 0 46px; }
.tbl svg:first-child { margin-right: 8px; }
.orange { color: #cc7832; }

.work { flex: 1; min-width: 0; display: flex; flex-direction: column; gap: 19px; padding: 18px 19px; background: #1d1e22; }
.editor { flex: 1; background: #18191e; border-radius: 8px; overflow: hidden; }
.tabs { display: flex; height: 63px; background: #222327; }
.etab { width: 138px; padding-left: 31px; border-right: 1px solid #1d1e22; }
.etab.on { background: #18191e; border: 0; }
.etab svg { margin-right: 8px; }
.tools { margin-left: auto; display: flex; align-items: center; gap: 21px; padding-right: 29px; }
.code { padding: 15px 0 0; }
code, .num { font-family: "Liberation Mono", "DejaVu Sans Mono", monospace; font-size: 15px; }
.line { display: flex; height: 24px; line-height: 24px; white-space: pre; }
.num { width: 41px; padding-right: 9px; text-align: right; color: #9aa0a3; }
.sel { height: 25px; background: #3d4043; }
.kw { color: #cc7832; font-weight: 700; }
.type { color: #cc7832; }
.str { color: #6a8759; }
.par { color: #e8e05c; }

.results { position: relative; height: 405px; background: #18191e; border-radius: 8px; overflow: hidden; }
.tablewrap { display: flex; height: 100%; align-items: flex-start; }
table { flex: 1; width: 100%; table-layout: fixed; border-collapse: collapse; color: #8b9399; }
col.c11 { width: 136px; }
th, td { text-align: left; white-space: nowrap; overflow: hidden; }
th { height: 43px; background: #222327; padding: 0 0 0 15px; border-right: 1px solid #1d1e22; }
.thdots { display: inline-block; margin: 0 15px 4px 0; color: #e4e8e9; vertical-align: baseline; }
td { height: 44px; padding: 0 0 0 10px; }
td.n { padding-left: 18px; font-family: "Liberation Mono", "DejaVu Sans Mono", monospace; font-size: 15px; color: #cc7832; }
tbody tr:nth-child(even) { background: #1d1e22; }
tbody tr:first-child td { height: 43px; }
.vbar { flex: none; width: 8px; height: 398px; background: #18191e; border-left: 1px solid #18191e; }
.vbar span { display: block; height: 21px; background: #868d94; }
.floaters { position: absolute; right: 18px; bottom: 18px; display: flex; gap: 5px; color: #c5cdcf; opacity: .35; }
.floaters button { width: 34px; height: 34px; justify-content: center; border-radius: 3px; background: #22232780; }

.hist { width: 475px; flex: none; padding: 0 34px; background: #222328; }
h1 { margin: 26px 0 0 4px; font-size: 29px; line-height: 34px; font-weight: 400; }
.links { margin: 16px 0 41px 13px; display: flex; gap: 10px; }
.card { position: relative; min-height: 124px; margin-bottom: 25px; padding: 24px 18px 0 24px; background: #1d1e22; border-radius: 8px; overflow: hidden; }
.card header { display: flex; align-items: center; height: 24px; margin-bottom: 14px; }
.card header > span { margin-left: 6px; }
.acts { margin-left: auto; display: flex; align-items: center; gap: 20px; padding-right: 12px; }
.cline { height: 25px; line-height: 25px; padding-left: 6px; white-space: pre; }
.card code { display: block; }
.hbar { height: 7px; margin: 6px 0 30px; background: #191a1f; }
.hbar span { display: block; width: 147px; height: 7px; background: #868d94; }
time { position: absolute; right: 0; bottom: 0; width: 80px; height: 32px; line-height: 32px; text-align: center; background: #222328; border-top-left-radius: 8px; }

.taskbar { display: flex; align-items: center; height: 60px; padding: 0 17px 0 0; border-top: 1px solid #b9bac4; background: linear-gradient(90deg, #d9dbe9 0, #d9dbe9 27%, #dddce9 36%, #d9dbea 50%, #dcdcec 56%, #eedbe9 59%, #efd7f3 63%, #ecd8f3 68%, #dcdcea 74%, #d9dbe8 80%, #dddbe8 100%); color: #202020; font-family: "Open Sans", "Noto Sans", sans-serif; font-size: 14px; }
.weather { flex: 1 1 0; padding-left: 26px; }
.wicon { position: relative; width: 28px; height: 38px; padding-top: 5px; margin-right: 10px; }
.wicon em { position: absolute; left: 13px; top: -2px; width: 20px; height: 20px; border-radius: 50%; background: #c42b1c; color: #fff; font-size: 13px; line-height: 20px; text-align: center; }
.wtext { display: flex; flex-direction: column; }
small { font-size: 14px; color: #555760; }
.dock { display: flex; align-items: center; gap: 7px; }
.app { position: relative; width: 48px; height: 48px; justify-content: center; border-radius: 4px; }
.app.on { background: #f1f1f7; }
.app.run::after, .app.on::after { content: ""; position: absolute; left: 20px; bottom: 0; width: 8px; height: 4px; border-radius: 2px; background: #7d7e87; }
.app.on::after { left: 14px; width: 20px; background: #0975d2; }
.letter { position: absolute; left: 9px; top: 16px; width: 15px; text-align: center; color: #fff; font: 700 12px/16px "Liberation Sans", sans-serif; }
.pic { position: absolute; right: 3px; top: 3px; }
.search { display: flex; align-items: center; width: 273px; height: 39px; padding: 0 8px 0 14px; border-radius: 20px; border: 1px solid #c9cad8; background: #f4f4fa; }
.search input { flex: 1; margin-left: 12px; font-size: 16px; }
.search input::placeholder { color: #5b5c63; opacity: 1; }
.tray { flex: 1 1 0; display: flex; align-items: center; justify-content: flex-end; padding: 0 8px 0 18px; }
.cl { margin-left: 24px; }
.lang { margin: 0 22px 0 23px; text-align: center; }
.sp { margin-left: 9px; }
.clock { margin: 0 10px 0 24px; text-align: right; }
.pilot { position: relative; margin-left: 20px; }
.pilot em { position: absolute; left: 7px; bottom: 0; width: 23px; height: 9px; border-radius: 2px; background: #fcc400; font: 700 8px/9px "Liberation Sans", sans-serif; text-align: center; }
</style>
